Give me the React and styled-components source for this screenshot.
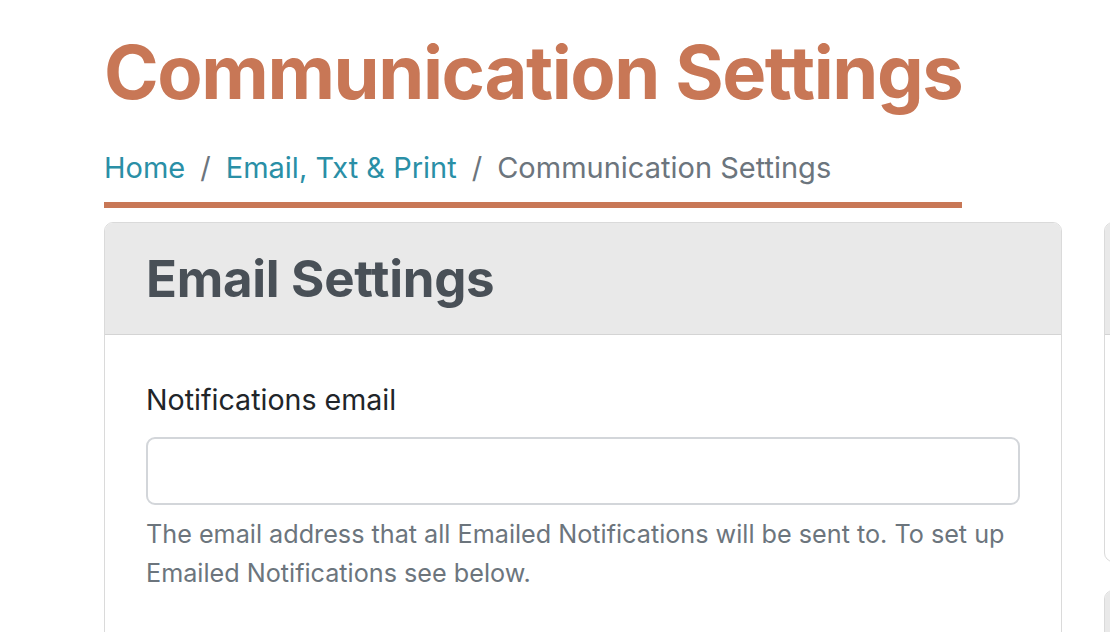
import React from 'react'
import styled, { createGlobalStyle } from 'styled-components'

const Global = createGlobalStyle`
  body {
    margin: 0;
    background: #ffffff;
    font-family: Inter, "Noto Sans", sans-serif;
    color: #212529;
  }
`

//page frame
const Page = styled.div`
  padding: 28px 0 0 104px;
  overflow: hidden;
  height: 632px;
  box-sizing: border-box;
`

const Header = styled.header`
  width: fit-content;
  border-bottom: 6px solid #c87756;
  margin-bottom: 14px;
`

const Title = styled.h1`
  margin: 0;
  font-size: 74px;
  line-height: 1.2;
  font-weight: 700;
  color: #c87756;
  letter-spacing: -1.4px;
`

const Crumbs = styled.nav`
  display: flex;
  align-items: center;
  font-size: 29px;
  line-height: 1.5;
  padding: 29px 0 13px;
`

const Crumb = styled.a`
  color: ${p => (p.active ? '#6c757d' : '#2a8fa6')};
  text-decoration: none;
`

const Sep = styled.span`
  color: #6c757d;
  padding: 0 15px;
`

const Columns = styled.div`
  display: grid;
  grid-template-columns: 958px 300px;
  gap: 42px;
  align-items: start;
`

const Side = styled.div`
  display: flex;
  flex-direction: column;
  gap: 28px;
`

const Card = styled.section`
  border: 1px solid #dadada;
  border-radius: 9px;
  overflow: hidden;
  background: #fff;
  height: ${p => p.h || 'auto'};
  box-sizing: border-box;
`

const CardHead = styled.div`
  background: #e9e9e9;
  border-bottom: 1px solid #d4d4d4;
  padding: 0 41px;
  height: 111px;
  display: flex;
  align-items: center;
`

const CardTitle = styled.h2`
  margin: 0;
  font-size: 51px;
  font-weight: 700;
  color: #495057;
  letter-spacing: -0.3px;
`

const CardBody = styled.div`
  padding: 45px 41px 80px;
`

const Label = styled.label`
  display: block;
  font-size: 28.6px;
  line-height: 39px;
  margin-bottom: 18px;
`

const Input = styled.input`
  display: block;
  width: 100%;
  box-sizing: border-box;
  height: 68px;
  border: 2px solid #d3d6da;
  border-radius: 9px;
  font-size: 26px;
  padding: 0 18px;
  outline: none;
`

const Help = styled.p`
  margin: 10px 0 0;
  font-size: 25.2px;
  line-height: 39px;
  color: #6c757d;
`

const App = () => {
  return (
    <Page>
      <Global />
      <Header>
        <Title>Communication Settings</Title>
        <Crumbs>
          <Crumb href="#">Home</Crumb>
          <Sep>/</Sep>
          <Crumb href="#">Email, Txt &amp; Print</Crumb>
          <Sep>/</Sep>
          <Crumb active>Communication Settings</Crumb>
        </Crumbs>
      </Header>
      <Columns>
        <Card>
          <CardHead>
            <CardTitle>Email Settings</CardTitle>
          </CardHead>
          <CardBody>
            <Label>Notifications email</Label>
            <Input type="email" />
            <Help>
              The email address that all Emailed Notifications will be sent to. To set up
              Emailed Notifications see below.
            </Help>
          </CardBody>
        </Card>
        <Side>
          <Card h="340px">
            <CardHead />
          </Card>
          <Card h="200px">
            <CardHead />
          </Card>
        </Side>
      </Columns>
    </Page>
  )
}

export default App
